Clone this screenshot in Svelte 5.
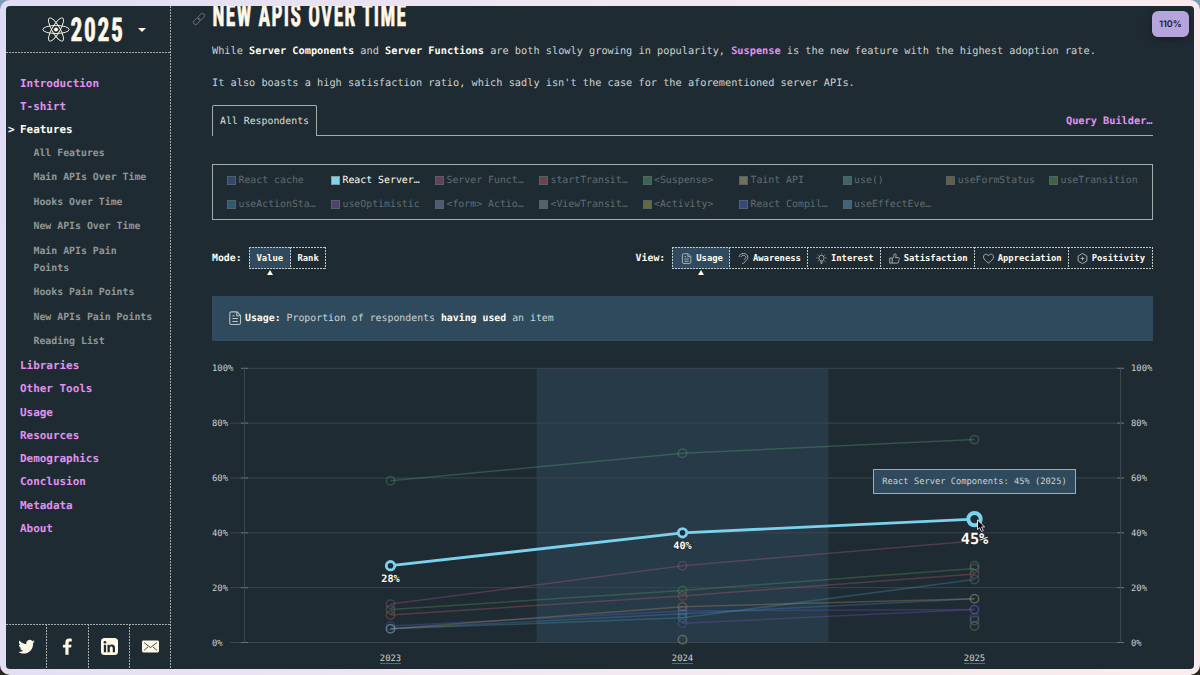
<script>
  const nav = [
    { label: "Introduction" },
    { label: "T-shirt" },
    {
      label: "Features",
      active: true,
      children: [
        "All Features",
        "Main APIs Over Time",
        "Hooks Over Time",
        "New APIs Over Time",
        "Main APIs Pain Points",
        "Hooks Pain Points",
        "New APIs Pain Points",
        "Reading List",
      ],
    },
    { label: "Libraries" },
    { label: "Other Tools" },
    { label: "Usage" },
    { label: "Resources" },
    { label: "Demographics" },
    { label: "Conclusion" },
    { label: "Metadata" },
    { label: "About" },
  ];

  const legend = [
    ["React cache", "#4861bf"],
    ["React Server…", "#7bd3f0"],
    ["Server Funct…", "#b3508a"],
    ["startTransit…", "#b95b62"],
    ["<Suspense>", "#4fa36b"],
    ["Taint API", "#c3b777"],
    ["use()", "#54a19d"],
    ["useFormStatus", "#b88b4f"],
    ["useTransition", "#5b9c4c"],
    ["useActionSta…", "#4187bd"],
    ["useOptimistic", "#84569c"],
    ["<form> Actio…", "#8089b4"],
    ["<ViewTransit…", "#8a979c"],
    ["<Activity>", "#a5a94c"],
    ["React Compil…", "#4c63c6"],
    ["useEffectEve…", "#57a3c0"],
  ];

  const modes = ["Value", "Rank"];
  const views = [
    ["Usage", "file"],
    ["Awareness", "ear"],
    ["Interest", "bulb"],
    ["Satisfaction", "thumb"],
    ["Appreciation", "heart"],
    ["Positivity", "plus"],
  ];

  // values for 2023, 2024 and 2025
  const series = [
    { color: "#5fae7c", values: [59, 69, 74] },
    { color: "#c45c93", values: [14, 28, 37] },
    { color: "#62a660", values: [12, 19, 27] },
    { color: "#c9656c", values: [10, 17, 25] },
    { color: "#5763d8", values: [6, 11.5, 12] },
    { color: "#4c8fd0", values: [5, 10.5, 16] },
    { color: "#c69a5c", values: [5, 13, 16] },
    { color: "#4fa3b5", values: [5, 9, 23] },
    { color: "#8258c0", values: [null, 7, 12] },
    { color: "#8b94c4", values: [null, null, 28] },
    { color: "#5d77d0", values: [null, null, 9] },
    { color: "#8a979c", values: [null, null, 8] },
    { color: "#e0d8a0", values: [null, 1, null] },
    { color: "#8cb06a", values: [null, null, 6] },
  ];
  const highlighted = [28, 40, 45];
  const years = [2023, 2024, 2025];
  const ticks = [100, 80, 60, 40, 20, 0];

  const x = (i) => 178.5 + i * 292;
  const y = (v) => 301.5 - v * 2.742;

  function line(values) {
    return values
      .map((v, i) => (v === null ? null : `${x(i)},${y(v)}`))
      .filter(Boolean)
      .join(" ");
  }
</script>

{#snippet icon(name)}
  <svg class="icon" viewBox="0 0 24 24">
    {#if name === "file"}
      <path d="M3 4.500A3 3 0 0 1 6 1.500h9.500L21.500 7.500V20a3 3 0 0 1-3 3H6a3 3 0 0 1-3-3zM15 2v6h6M7.500 8H11M7.500 13h9.500M7.500 18h9.500" />
    {:else if name === "ear"}
      <path d="M2.500 8.500C2.500 4 7 1 12 1s9.500 3.500 9.500 8.500c0 4-3 5.500-5 8S13 23 9 23M7 9c0-2.500 2-4 5-4s5 2 5 4.500c0 3-3 3.500-4 5.500" />
    {:else if name === "bulb"}
      <path d="M9 17c0-2-2.500-3-2.500-6.500a5.500 5.500 0 0 1 11 0C17.500 14 15 15 15 17zM9 20h6M10.500 23h3M12 1v2M1 11h2.500M20.500 11H23M4 3.500l2 2M20 3.500l-2 2M4 18.500l2-2M20 18.500l-2-2" />
    {:else if name === "thumb"}
      <path d="M1.500 11H7v11H1.500zM7 12c3-2 4-4.500 4-8.500 0-3 4.500-2.500 4.500 1.500 0 2-.7 3.500-1.500 5h6.500c3 0 2.500 3.500 1 4 1 1 .5 3-.7 3.500.7 1 0 4.500-2.300 4.500H7" />
    {:else if name === "heart"}
      <path d="M12 22C7 18 1 13.500 1 8.500 1 2 9 .5 12 6c3-5.500 11-4 11 2.500C23 13.500 17 18 12 22z" />
    {:else}
      <path d="M12 1l9.500 5.500v11L12 23l-9.500-5.500v-11zM12 8v8M8 12h8" />
    {/if}
  </svg>
{/snippet}

<div class="frame">
  <div class="window">
    <aside>
      <header>
        <svg width="84" height="30" viewBox="0 0 84 30">
          <g fill="none" stroke="#fff8e7" stroke-width="0.9" transform="translate(14 14.500)">
            <ellipse rx="13.200" ry="4" />
            <ellipse rx="13.200" ry="4" transform="rotate(60)" />
            <ellipse rx="13.200" ry="4" transform="rotate(120)" />
            <circle r="2" fill="#fff8e7" stroke="none" />
          </g>
          <text class="display" x="28.500" y="26" font-size="32.500" textLength="54" lengthAdjust="spacingAndGlyphs">2025</text>
        </svg>
        <i class="caret"></i>
      </header>

      <nav>
        {#each nav as item}
          <a href="#top" class="item" class:active={item.active}>{item.label}</a>
          {#if item.children}
            <div class="children">
              {#each item.children as child}
                <a href="#top">{child}</a>
              {/each}
            </div>
          {/if}
        {/each}
      </nav>

      <footer>
        <div>
          <svg viewBox="0 0 24 24"><path d="M23.600 5c-.9.4-1.800.7-2.700.8 1-.6 1.700-1.500 2.100-2.600-.9.5-1.900.9-3 1.100a4.800 4.800 0 0 0-8.200 4.400C7.900 8.500 4.400 6.600 2 3.700c-1.300 2.200-.6 5 1.500 6.400-.8 0-1.500-.2-2.200-.6 0 2.300 1.600 4.300 3.800 4.800-.7.2-1.400.2-2.100.1.600 1.900 2.400 3.300 4.500 3.300-2 1.600-4.500 2.300-7 2 9.700 6 21.300-.8 20.700-12.200.9-.7 1.800-1.500 2.400-2.500z" /></svg>
        </div>
        <div>
          <svg viewBox="0 0 24 24"><path d="M9 23.500V13.500H5.500v-4H9V6.600C9 2.800 11 .8 14.400.8c1.500 0 3 .2 3.600.4v3.600h-2.300c-1.700 0-2.200.9-2.200 2.200v2.500h4.200l-.6 4h-3.600v10z" /></svg>
        </div>
        <div>
          <svg viewBox="0 0 24 24">
            <rect x="0" y="0" width="24" height="24" rx="5" />
            <path fill="#1f2c34" d="M4 9.500h3.200V20H4zM9.200 9.500h3V11c1.800-2.800 7.600-2.300 7.600 3v6h-3.200v-5.500c0-3.200-4.200-3-4.200 0V20H9.200z" />
            <circle fill="#1f2c34" cx="5.600" cy="6" r="1.900" />
          </svg>
        </div>
        <div>
          <svg viewBox="0 0 24 24">
            <rect x="0" y="3.500" width="24" height="17" rx="2" />
            <path fill="none" stroke="#1f2c34" stroke-width="1.200" d="M3 6.500l9 7 9-7M3 17.500l5.500-5M21 17.500l-5.500-5" />
          </svg>
        </div>
      </footer>
    </aside>

    <main>
      <h2>
        <svg class="anchor" viewBox="0 0 24 24"><g transform="rotate(-45 12 12)"><rect x="-2" y="7.500" width="15" height="9" rx="4.500" /><rect x="11" y="7.500" width="15" height="9" rx="4.500" /></g></svg>
        <svg class="title" width="200" height="24" viewBox="0 0 200 24">
          <text class="display" x="0.500" y="19.500" font-size="32" textLength="195" lengthAdjust="spacingAndGlyphs">NEW APIS OVER TIME</text>
        </svg>
      </h2>

      <p>While <b>Server Components</b> and <b>Server Functions</b> are both slowly growing in popularity, <a href="#top">Suspense</a> is the new feature with the highest adoption rate.</p>
      <p>It also boasts a high satisfaction ratio, which sadly isn't the case for the aforementioned server APIs.</p>

      <div class="tabs">
        <div class="tab">All Respondents</div>
        <div class="rest"><a href="#top">Query Builder…</a></div>
      </div>

      <ul class="legend">
        {#each legend as [label, color], i}
          <li class:on={i === 1}><i style="background: {color}"></i>{label}</li>
        {/each}
      </ul>

      <div class="controls">
        <div class="group modes">
          <b>Mode:</b>
          {#each modes as mode, i}
            <button class="dashed" class:selected={i === 0}>{mode}</button>
          {/each}
        </div>
        <div class="group">
          <b>View:</b>
          {#each views as [label, name], i}
            <button class="dashed" class:selected={i === 0}>{@render icon(name)}{label}</button>
          {/each}
        </div>
      </div>

      <div class="note">
        {@render icon("file")}
        <span><b>Usage:</b> Proportion of respondents <b>having used</b> an item</span>
      </div>

      <div class="chart">
        <svg width="941" height="328" viewBox="0 0 941 328">
          <rect x="324.500" y={y(100)} width="292" height={y(0) - y(100)} fill="#263a48" />
          {#each ticks as t}
            <g class="grid">
              <line x1={t === 100 ? 29 : 18} x2="912" y1={y(t)} y2={y(t)} />
              <line class="tick" x1="29" x2="36" y1={y(t)} y2={y(t)} />
              <line class="tick" x1="905" x2="912" y1={y(t)} y2={y(t)} />
            </g>
            <text class="axis" x="0" y={y(t) + 3}>{t}%</text>
            <text class="axis" x="919" y={y(t) + 3}>{t}%</text>
          {/each}
          <g class="grid">
            <line x1="32.500" x2="32.500" y1={y(100)} y2={y(0)} />
            <line x1="908.500" x2="908.500" y1={y(100)} y2={y(0)} />
          </g>
          {#each years as year, i}
            <text class="axis" x={x(i)} y="319.500" text-anchor="middle">{year}</text>
            <line class="under" x1={x(i) - 10.5} x2={x(i) + 10.5} y1="322.500" y2="322.500" />
          {/each}

          {#each series as s}
            <g class="series" stroke={s.color}>
              <polyline points={line(s.values)} />
              {#each s.values as v, i}
                {#if v !== null && v !== 37}
                  <circle cx={x(i)} cy={y(v)} r="4.200" />
                {/if}
              {/each}
            </g>
          {/each}

          <g class="highlight">
            <polyline points={line(highlighted)} />
            {#each highlighted as v, i}
              <circle class:big={i === 2} cx={x(i)} cy={y(v)} r={i === 2 ? 6.2 : 4.2} />
              <text class:big={i === 2} x={x(i)} y={y(v) + (i === 2 ? 24.5 : 16.5)}>{v}%</text>
            {/each}
          </g>
          <path class="cursor" d="M765.500 179v9.500l2.200-1.900 1.700 3.800 1.900-.8-1.700-3.700h3z" />
        </svg>
        <div class="tooltip">React Server Components: 45% (2025)</div>
      </div>
    </main>

    <div class="zoom">110%</div>
  </div>
</div>

<style>
  :global(body) {
    background: linear-gradient(to bottom, #7d9cb5 50%, #2a2620 50%);
    overflow: hidden;
  }

  .frame {
    box-sizing: border-box;
    height: 675px;
    padding: 6px;
    border-radius: 10px;
    background: linear-gradient(100deg, #e0dcf5, #f2e8f1 50%, #fbecec);
    color: #ccd3d0;
    font-family: "DejaVu Sans Mono", monospace;
    font-size: 9.87px;
    text-rendering: geometricPrecision;
  }

  .window {
    position: relative;
    display: flex;
    height: 663px;
    border-radius: 4px;
    background: #1f2b33;
    overflow: hidden;
  }

  a {
    color: #e291f0;
    font-weight: bold;
    text-decoration: none;
  }

  b {
    color: #fffcf0;
  }

  .display {
    font-family: Roboto, "Liberation Sans", sans-serif;
    font-stretch: 75%;
    font-weight: 700;
    letter-spacing: 0.07em;
    fill: #fff8e7;
    stroke: #fff8e7;
    stroke-width: 0.700;
  }

  aside {
    display: flex;
    flex-direction: column;
    box-sizing: border-box;
    width: 165px;
    flex: none;
    background: repeating-linear-gradient(to bottom, #a6adac 0 2px, transparent 2px 3px) right / 1px 100% no-repeat;
  }

  header {
    display: flex;
    align-items: center;
    box-sizing: border-box;
    height: 47px;
    padding-left: 36px;
    background: repeating-linear-gradient(to right, #a6adac 0 2px, transparent 2px 3px) bottom / 100% 1px no-repeat;
  }

  header svg,
  .title {
    overflow: visible;
  }

  .caret {
    margin-left: 12px;
    border: 4px solid transparent;
    border-top-color: #fff8e7;
    border-bottom: 0;
  }

  nav {
    flex: 1;
    padding-top: 18.800px;
  }

  .item {
    display: block;
    padding-left: 14px;
    font-size: 10.950px;
    line-height: 23.250px;
  }

  .item.active {
    color: #fffcf0;
  }

  .item.active::before {
    content: ">";
    display: inline-block;
    width: 12px;
    margin-left: -12px;
  }

  .children a {
    display: block;
    padding: 3.500px 15px 3.500px 27.500px;
    color: #909896;
    line-height: 17.400px;
  }

  footer {
    display: flex;
    height: 45px;
    background: repeating-linear-gradient(to right, #a6adac 0 2px, transparent 2px 3px) top / 100% 1px no-repeat;
  }

  footer div {
    display: flex;
    align-items: center;
    justify-content: center;
    width: 41.300px;
  }

  footer div:not(:last-child) {
    background: repeating-linear-gradient(to bottom, #a6adac 0 2px, transparent 2px 3px) right / 1px 100% no-repeat;
  }

  footer svg {
    width: 17px;
    height: 17px;
    fill: #fff8e7;
  }

  main {
    width: 940.500px;
    padding-left: 41px;
  }

  h2 {
    display: flex;
    height: 24px;
    margin: 0 0 12.500px -19px;
  }

  h2 svg {
    flex: none;
  }

  .anchor {
    width: 12px;
    height: 12px;
    margin: 7px 7px 0 0;
    fill: none;
    stroke: #69747a;
    stroke-width: 1.800;
    overflow: visible;
  }

  p {
    margin: 0 0 16.500px;
    font-size: 10.280px;
    line-height: 16px;
    white-space: nowrap;
  }

  .tabs {
    display: flex;
    height: 31px;
    margin-top: -2.500px;
  }

  .tab {
    border: 1px solid #a2adad;
    border-bottom: 0;
    border-radius: 2px 2px 0 0;
    box-sizing: border-box;
    width: 105px;
    padding-left: 7px;
    color: #dadfdb;
    line-height: 32px;
  }

  .rest {
    flex: 1;
    border-bottom: 1px solid #a2adad;
    font-size: 10.270px;
    line-height: 33px;
    text-align: right;
  }

  .legend {
    display: grid;
    grid-template-columns: 104px 104px 104px 103.500px 96.500px 103.600px 103.700px 102.700px 1fr;
    grid-auto-rows: 23.800px;
    box-sizing: border-box;
    height: 56px;
    margin: 28px 0 27px;
    padding: 3.500px 0 0 14px;
    border: 1px solid #a2adad;
    list-style: none;
  }

  .legend li {
    display: flex;
    align-items: center;
    color: #fffcf0;
    white-space: nowrap;
  }

  .legend li:not(.on) {
    color: #5f6b70;
  }

  .legend i {
    box-sizing: border-box;
    width: 9px;
    height: 9px;
    margin-right: 2.500px;
    border: 1px solid #8b9798;
  }

  .legend li:not(.on) i {
    opacity: 0.5;
  }

  .controls {
    display: flex;
    justify-content: space-between;
    height: 22px;
  }

  .group {
    display: flex;
    align-items: center;
  }

  .group > b {
    margin-right: 7px;
  }

  button {
    position: relative;
    display: flex;
    align-items: center;
    height: 22px;
    margin: 0 -1px 0 0;
    padding: 0 7.500px 0 8.500px;
    border: 0;
    color: #fffcf0;
    font: bold 8.870px "DejaVu Sans Mono", monospace;
  }

  .modes button {
    padding: 0 7.700px;
  }

  .group button:last-child {
    margin-right: 0;
  }

  .dashed {
    background:
      repeating-linear-gradient(to right, #c3c9c5 0 2px, transparent 2px 3px) top / 100% 1px no-repeat,
      repeating-linear-gradient(to right, #c3c9c5 0 2px, transparent 2px 3px) bottom / 100% 1px no-repeat,
      repeating-linear-gradient(to bottom, #c3c9c5 0 2px, transparent 2px 3px) left / 1px 100% no-repeat,
      repeating-linear-gradient(to bottom, #c3c9c5 0 2px, transparent 2px 3px) right / 1px 100% no-repeat;
  }

  .selected {
    background-color: #2f4a5e;
  }

  .selected::after {
    content: "";
    position: absolute;
    top: 23px;
    left: 50%;
    margin-left: -3px;
    border: 3px solid transparent;
    border-bottom: 5px solid #fffcf0;
    border-top: 0;
  }

  .icon {
    width: 11px;
    height: 11px;
    margin-right: 4px;
    fill: none;
    stroke: #b9c3c5;
    stroke-width: 1.800;
  }

  .selected .icon {
    margin-right: 4.500px;
  }

  .note {
    display: flex;
    align-items: center;
    height: 44.500px;
    margin-top: 27px;
    padding-left: 16px;
    background: #2f4a5c;
  }

  .note .icon {
    width: 14px;
    height: 14px;
    margin-right: 3px;
  }

  .chart {
    position: relative;
    height: 328px;
  }

  .grid line {
    stroke: #3a474e;
  }

  .grid .tick {
    stroke: #65737a;
  }

  .axis {
    fill: #c9d0cd;
    font-size: 8.870px;
  }

  .under {
    stroke: #5d696e;
  }

  .series {
    fill: none;
    stroke-opacity: 0.3;
    stroke-width: 1.500;
  }

  .highlight {
    fill: none;
    stroke: #7bd1ee;
    stroke-width: 2.800;
  }

  .highlight circle {
    fill: #1f2b33;
  }

  .highlight circle.big {
    stroke-width: 4;
  }

  .highlight text {
    fill: #fffcf0;
    stroke: #1f2b33;
    stroke-width: 2;
    paint-order: stroke;
    font-size: 10.200px;
    font-weight: bold;
    text-anchor: middle;
  }

  .highlight text.big {
    font-size: 15.300px;
  }

  .cursor {
    fill: #000;
    stroke: #fff;
    stroke-width: 0.8;
  }

  .tooltip {
    position: absolute;
    top: 128px;
    left: 661px;
    box-sizing: border-box;
    width: 203px;
    height: 25px;
    border: 1px solid #a2adad;
    background: #2f4a5c;
    font-size: 8.750px;
    line-height: 24px;
    text-align: center;
  }

  .zoom {
    position: absolute;
    top: 5px;
    right: 5px;
    width: 37px;
    height: 26px;
    border-radius: 6px;
    background: #b5a5dc;
    box-shadow: 0 2px 8px #0005;
    color: #1b1630;
    font: 600 9px/27px Inter, sans-serif;
    text-align: center;
  }
</style>
